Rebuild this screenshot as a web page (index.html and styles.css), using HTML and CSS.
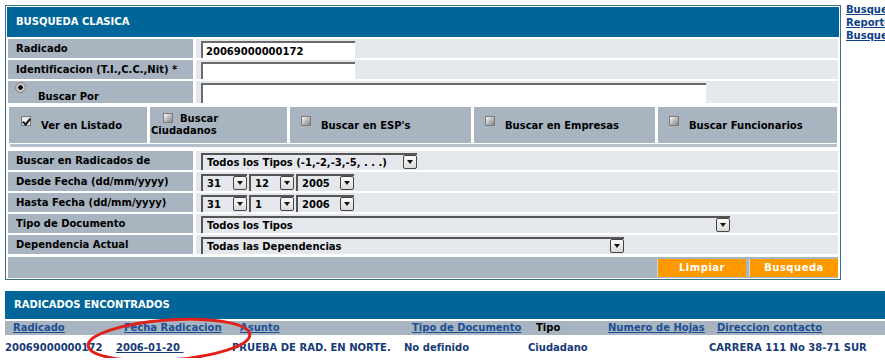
FILE: index.html
```html
<!DOCTYPE html>
<html lang="es">
<head>
    <meta charset="UTF-8">
    <meta name="viewport" content="width=device-width, initial-scale=1.0">
    <title>Busqueda Clasica</title>
    <link rel="stylesheet" href="styles.css">
</head>
<body>
    <div class="top">
        <div class="panel">
            <div class="panel-title">BUSQUEDA CLASICA</div>

            <div class="form-grid">
                <div class="lbl">Radicado</div>
                <div class="val"><span class="txt short">20069000000172</span></div>

                <div class="lbl">Identificacion (T.I.,C.C.,Nit) *</div>
                <div class="val"><span class="txt short"></span></div>

                <div class="lbl lbl-radio"><span class="radio"></span><span class="radio-text">Buscar Por</span></div>
                <div class="val"><span class="txt long"></span></div>

                <div class="checks">
                    <div class="check-row">
                        <div class="chk c1"><span class="box checked"></span>Ver en Listado</div>
                        <div class="chk c2 stacked"><span><span class="box"></span>Buscar</span><span class="under">Ciudadanos</span></div>
                        <div class="chk c3"><span class="box"></span>Buscar en ESP's</div>
                        <div class="chk c4"><span class="box"></span>Buscar en Empresas</div>
                        <div class="chk c5"><span class="box"></span>Buscar Funcionarios</div>
                    </div>
                    <div class="check-strip"></div>
                </div>

                <div class="lbl">Buscar en Radicados de</div>
                <div class="val"><span class="sel w-tipos">Todos los Tipos (-1,-2,-3,-5, . . .)<i class="arrow"></i></span></div>

                <div class="lbl">Desde Fecha (dd/mm/yyyy)</div>
                <div class="val">
                    <span class="sel w-day">31<i class="arrow"></i></span>
                    <span class="sel w-month">12<i class="arrow"></i></span>
                    <span class="sel w-year">2005<i class="arrow"></i></span>
                </div>

                <div class="lbl">Hasta Fecha (dd/mm/yyyy)</div>
                <div class="val">
                    <span class="sel w-day">31<i class="arrow"></i></span>
                    <span class="sel w-month">1<i class="arrow"></i></span>
                    <span class="sel w-year">2006<i class="arrow"></i></span>
                </div>

                <div class="lbl">Tipo de Documento</div>
                <div class="val"><span class="sel w-doc">Todos los Tipos<i class="arrow"></i></span></div>

                <div class="lbl">Dependencia Actual</div>
                <div class="val"><span class="sel w-dep">Todas las Dependencias<i class="arrow"></i></span></div>

                <div class="actions">
                    <span class="btn">Limpiar</span>
                    <span class="btn">Busqueda</span>
                </div>
            </div>
        </div>

        <div class="side-links">
            <a href="#">Busqueda por Expediente</a>
            <a href="#">Reportes</a>
            <a href="#">Busqueda Avanzada</a>
        </div>
    </div>

    <div class="results">
        <div class="results-title">RADICADOS ENCONTRADOS</div>
        <div class="res-grid res-head">
            <a href="#">Radicado</a>
            <a href="#">Fecha Radicacion</a>
            <a href="#">Asunto</a>
            <a href="#">Tipo de Documento</a>
            <span>Tipo</span>
            <a href="#">Numero de Hojas</a>
            <a href="#">Direccion contacto</a>
        </div>
        <div class="res-grid res-row">
            <span>20069000000172</span>
            <a href="#">2006-01-20&nbsp;</a>
            <span>PRUEBA DE RAD. EN NORTE.</span>
            <span>No definido</span>
            <span>Ciudadano</span>
            <span></span>
            <span>CARRERA 111 No 38-71 SUR</span>
        </div>

        <svg class="mark" width="200" height="60" viewBox="0 0 200 60">
            <ellipse cx="98" cy="30" rx="81" ry="20" transform="rotate(-4 98 30)" fill="none" stroke="#e0201a" stroke-width="3"/>
        </svg>
    </div>
</body>
</html>
```

FILE: styles.css
```css
html {
    overflow: hidden;
}

body {
    margin: 0;
    padding: 5px 0 0 5px;
    font-family: "DejaVu Sans", Verdana, sans-serif;
    font-size: 10px;
    font-weight: bold;
    color: #000;
    width: 1100px;
}

.top {
    display: flex;
    align-items: flex-start;
}

.panel {
    width: 832px;
    border: 1px solid #3a6f7e;
    padding: 0 1px 1px 1px;
}

.panel-title {
    background: #006699;
    color: #fff;
    height: 30px;
    line-height: 30px;
    padding-left: 9px;
    margin-top: 1px;
}

.form-grid {
    display: grid;
    grid-template-columns: 185px 1fr;
    gap: 2px 3px;
    margin: 2px 1px 0 1px;
}

.lbl {
    background: #a8b4c0;
    height: 19px;
    line-height: 19px;
    padding-left: 8px;
}

.val {
    background: #e4e7eb;
    height: 19px;
    display: flex;
    align-items: center;
    gap: 2px;
    padding-left: 5px;
}

.txt {
    display: block;
    height: 17px;
    line-height: 17px;
    background: #fff;
    border-top: 2px solid #6a6a6a;
    border-left: 2px solid #6a6a6a;
    box-sizing: border-box;
    padding-left: 3px;
    margin-top: 1px;
}

.txt.short {
    width: 154px;
}

.txt.long {
    width: 505px;
    height: 20px;
}

.lbl-radio {
    height: 22px;
    line-height: 11px;
    position: relative;
    padding-left: 0;
}

.lbl-radio + .val {
    height: 22px;
}

.radio {
    position: absolute;
    left: 7px;
    top: 1px;
    width: 9px;
    height: 9px;
    border-radius: 50%;
    background: radial-gradient(circle at 50% 50%, #000 0 2px, #d8d8d8 2.5px, #9a9a9a 100%);
    border: 1px solid #888;
}

.radio-text {
    display: block;
    padding: 10px 0 0 30px;
}

.checks {
    grid-column: 1 / 3;
    padding: 2px 1px 0 1px;
}

.check-row {
    display: flex;
    gap: 3px;
}

.chk {
    background: #a8b4c0;
    height: 36px;
    display: flex;
    align-items: center;
    box-sizing: border-box;
}

.c1 { width: 138px; padding-left: 12px; }
.c2 { width: 137px; }
.c3 { width: 181px; padding-left: 11px; }
.c4 { width: 181px; padding-left: 11px; }
.c5 { flex: 1; padding-left: 11px; }

.chk .box {
    display: inline-block;
    width: 10px;
    height: 10px;
    margin-right: 10px;
    margin-top: -8px;
    border: 1px solid #7a7a7a;
    box-sizing: border-box;
    background: linear-gradient(135deg, #fafafa, #b0b0b0 60%, #8a8a8a);
    position: relative;
}

.chk .box.checked {
    background: #e8e8e8;
}

.chk .box.checked::after {
    content: '';
    position: absolute;
    left: 2px;
    top: 0;
    width: 3px;
    height: 6px;
    border-right: 2px solid #111;
    border-bottom: 2px solid #111;
    transform: rotate(40deg);
}

.stacked {
    flex-direction: column;
    align-items: flex-start;
    justify-content: center;
    line-height: 12px;
}

.stacked > span:first-child {
    padding-left: 13px;
    display: flex;
    align-items: flex-end;
}

.stacked .box {
    margin-right: 7px;
    margin-top: 0;
    margin-bottom: 2px;
}

.stacked .under {
    padding-left: 1px;
}

.check-strip {
    height: 3px;
    background: #b4bfca;
    margin: 1px 0 2px 1px;
}

.sel {
    display: inline-flex;
    align-items: center;
    height: 17px;
    box-sizing: border-box;
    border-top: 2px solid #555;
    border-left: 2px solid #555;
    padding-left: 4px;
    margin-top: 1px;
    justify-content: space-between;
}

.arrow {
    display: inline-block;
    width: 14px;
    height: 14px;
    box-sizing: border-box;
    border: 1px solid #444;
    border-radius: 2px;
    background: linear-gradient(#fbfbfb, #d9d9d9);
    position: relative;
    margin-left: 4px;
}

.arrow::after {
    content: '';
    position: absolute;
    left: 3px;
    top: 4px;
    border-left: 3px solid transparent;
    border-right: 3px solid transparent;
    border-top: 4px solid #111;
}

.w-tipos { width: 216px; }
.w-day { width: 46px; }
.w-month { width: 45px; }
.w-year { width: 58px; }
.w-doc { width: 529px; }
.w-dep { width: 423px; }

.actions {
    grid-column: 1 / 3;
    background: #a8b4c0;
    height: 21px;
    display: flex;
    justify-content: flex-end;
    align-items: center;
    gap: 3px;
    margin-top: 1px;
}

.btn {
    background: #ff9900;
    color: #fff;
    width: 88px;
    height: 18px;
    line-height: 18px;
    text-align: center;
    letter-spacing: 0.5px;
    border-left: 1px solid #cfd6dd;
}

.side-links {
    display: flex;
    flex-direction: column;
    margin-left: 5px;
    margin-top: -2px;
    line-height: 13px;
}

.side-links a {
    color: #10408a;
    white-space: nowrap;
}

.results {
    margin-top: 11px;
    position: relative;
}

.results-title {
    background: #006699;
    color: #fff;
    height: 28px;
    line-height: 28px;
    padding-left: 9px;
}

.res-grid {
    display: grid;
    grid-template-columns: 111px 116px 172px 124px 72px 109px 1fr;
}

.res-head {
    background: #a8b4c0;
    height: 14px;
    line-height: 14px;
    margin-top: 2px;
}

.res-head > * {
    padding-left: 8px;
}

.res-head a {
    color: #1a4f94;
}

.res-row {
    height: 20px;
    line-height: 20px;
    margin-top: 3px;
    color: #173a78;
}

.res-row a {
    color: #173a78;
}

.mark {
    position: absolute;
    left: 66px;
    top: 19px;
}
```
